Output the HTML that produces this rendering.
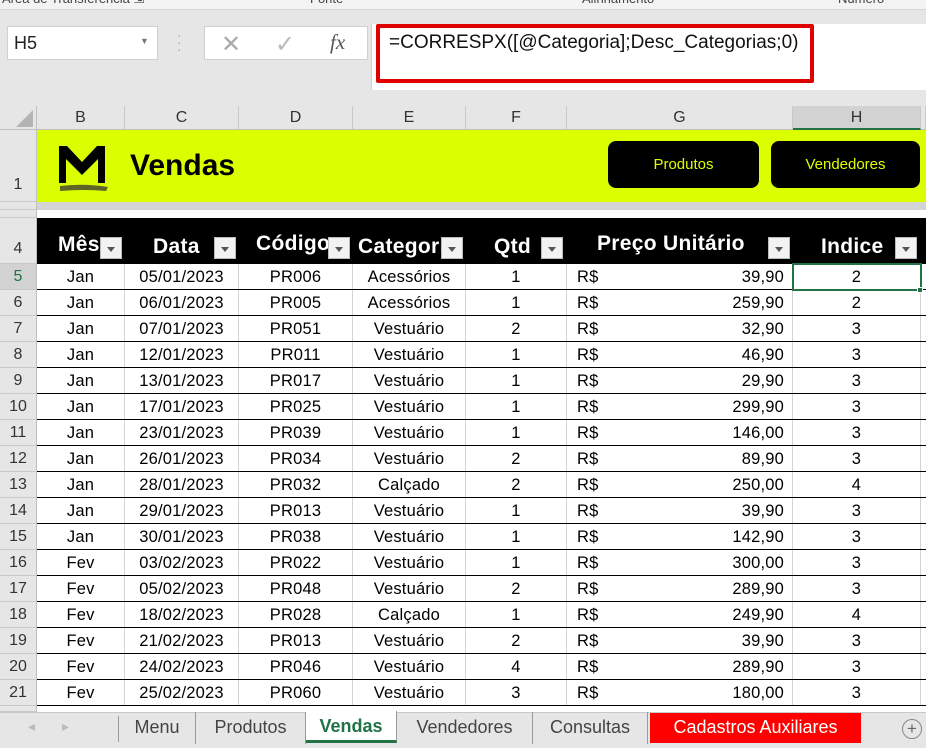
<!DOCTYPE html>
<html><head><meta charset="utf-8"><style>
*{margin:0;padding:0;box-sizing:border-box}
body{width:926px;height:748px;overflow:hidden;background:#e6e6e6;font-family:"Liberation Sans",sans-serif;position:relative}
.a{position:absolute}
.c{position:absolute;white-space:nowrap}
.sheet{left:37px;top:130px;width:889px;height:582px;background:#fff}
.ch{top:106px;height:24px;font-size:16px;color:#333;text-align:center;line-height:24px;border-right:1px solid #c8c8c8;background:#e6e6e6;border-bottom:1px solid #bfbfbf}
.rh{left:0;width:37px;font-size:16px;color:#333;text-align:center;background:#e6e6e6;border-bottom:1px solid #c8c8c8;border-right:1px solid #bfbfbf}
.row{left:37px;width:889px;height:26px;border-bottom:1.5px solid #000;font-size:16.5px;color:#000;line-height:26px}
.row div{position:absolute;top:0;height:25px;border-right:1px solid #d4d4d4;text-align:center;letter-spacing:0.2px}
.hd{color:#fff;font-weight:900;font-size:21px;position:absolute;letter-spacing:0.3px}
.dd{position:absolute;width:22px;height:22px;background:#f2f2f2;border:1px solid #bbb;top:237px;z-index:2}
.dd:after{content:"";position:absolute;left:6px;top:9px;border-left:4px solid transparent;border-right:4px solid transparent;border-top:5px solid #555}
.tab{position:absolute;top:712px;height:32px;line-height:30px;font-size:18px;color:#444;text-align:center;border-right:1px solid #999}
</style></head><body>
<div class="a" style="left:0;top:0;width:926px;height:10px;background:#f3f3f3;border-bottom:1px solid #d6d6d6"></div>
<div class="c" style="left:2px;top:-9px;font-size:13px;color:#444">Área de Transferência ⇲</div>
<div class="c" style="left:310px;top:-9px;font-size:13px;color:#444">Fonte</div>
<div class="c" style="left:582px;top:-9px;font-size:13px;color:#444">Alinhamento</div>
<div class="c" style="left:838px;top:-9px;font-size:13px;color:#444">Número</div>
<div class="a" style="left:7px;top:26px;width:151px;height:34px;background:#fff;border:1px solid #d0d0d0"></div>
<div class="c" style="left:14px;top:33px;font-size:18px;color:#222">H5</div>
<div class="c" style="left:140px;top:36px;font-size:9px;color:#777">▼</div>
<div class="c" style="left:177px;top:32px;font-size:14px;color:#aaa;line-height:7px">·<br>·<br>·</div>
<div class="a" style="left:204px;top:26px;width:164px;height:34px;background:#fff;border:1px solid #d0d0d0"></div>
<div class="c" style="left:221px;top:30px;font-size:24px;color:#aaa">✕</div>
<div class="c" style="left:275px;top:30px;font-size:24px;color:#bbb">✓</div>
<div class="c" style="left:330px;top:30px;font-size:21px;color:#555;font-style:italic;font-family:'Liberation Serif',serif">fx</div>
<div class="a" style="left:371px;top:24px;width:555px;height:66px;background:#fff;border-left:1px solid #d0d0d0"></div>
<div class="a" style="left:376px;top:24px;width:438px;height:59px;border:4px solid #e00000;border-radius:2px"></div>
<div class="c" style="left:389px;top:32px;font-size:19px;color:#111">=CORRESPX([@Categoria];Desc_Categorias;0)</div>

<div class="a" style="left:0;top:106px;width:37px;height:24px;background:#e6e6e6;border-right:1px solid #bfbfbf;border-bottom:1px solid #bfbfbf"></div>
<div class="a" style="left:16px;top:110px;width:0;height:0;border-left:17px solid transparent;border-bottom:17px solid #b4b4b4"></div>
<div class="c ch" style="left:37px;width:88px">B</div>
<div class="c ch" style="left:125px;width:114px">C</div>
<div class="c ch" style="left:239px;width:114px">D</div>
<div class="c ch" style="left:353px;width:113px">E</div>
<div class="c ch" style="left:466px;width:101px">F</div>
<div class="c ch" style="left:567px;width:226px">G</div>
<div class="c ch" style="left:793px;width:128px;background:#d2d2d2;border-bottom:2px solid #217346">H</div>
<div class="c ch" style="left:921px;width:5px"></div>

<div class="a sheet"></div>
<div class="a" style="left:37px;top:130px;width:889px;height:72px;background:#dcff00"></div>
<div class="a" style="left:37px;top:202px;width:889px;height:8px;background:#d4d4d4"></div>
<svg class="a" style="left:56px;top:142px" width="56" height="52" viewBox="0 0 56 52"><path d="M3 41V4h8l15 16L41 4h8v37h-7V17L26 33 10 17v24z" fill="#000"/><path d="M4 44 Q28 41 52 45 L50 49 Q28 47 4 49z" fill="#333" opacity="0.75"/></svg>
<div class="c" style="left:130px;top:149px;font-size:30px;font-weight:bold;color:#000">Vendas</div>
<div class="a" style="left:608px;top:141px;width:151px;height:47px;background:#000;border-radius:8px;color:#dcff00;font-size:15px;text-align:center;line-height:47px">Produtos</div>
<div class="a" style="left:771px;top:141px;width:149px;height:47px;background:#000;border-radius:8px;color:#dcff00;font-size:15px;text-align:center;line-height:47px">Vendedores</div>

<div class="a" style="left:37px;top:218px;width:889px;height:46px;background:#000"></div>
<div class="hd" style="left:58px;top:233px">Mês</div><div class="dd" style="left:100px"></div>
<div class="hd" style="left:153px;top:235px">Data</div><div class="dd" style="left:214px"></div>
<div class="hd" style="left:256px;top:232px">Código</div><div class="dd" style="left:328px"></div>
<div class="hd" style="left:358px;top:235px">Categoria</div><div class="dd" style="left:441px"></div>
<div class="hd" style="left:494px;top:235px">Qtd</div><div class="dd" style="left:541px"></div>
<div class="hd" style="left:597px;top:232px">Preço Unitário</div><div class="dd" style="left:768px"></div>
<div class="hd" style="left:821px;top:235px">Indice</div><div class="dd" style="left:895px"></div>

<div class="c rh" style="top:130px;height:72px;line-height:110px">1</div>
<div class="c rh" style="top:202px;height:8px"></div>
<div class="c rh" style="top:210px;height:8px"></div>
<div class="c rh" style="top:218px;height:46px;line-height:62px">4</div>

<div id="rows"></div>
<div class="a" style="left:37px;top:706px;width:889px;height:6px;background:#fff"></div>
<div class="c rh" style="top:706px;height:6px"></div>

<div class="a" style="left:0;top:712px;width:926px;height:36px;background:#e6e6e6;border-top:1px solid #c8c8c8"></div>
<div class="c" style="left:28px;top:718px;font-size:14px;color:#bbb">◂</div>
<div class="c" style="left:62px;top:718px;font-size:14px;color:#bbb">▸</div>
<div class="a" style="left:118px;top:716px;height:26px;border-left:1px solid #999"></div>
<div class="tab" style="left:119px;width:77px">Menu</div>
<div class="tab" style="left:196px;width:110px">Produtos</div>
<div class="tab" style="left:306px;width:91px;background:#fff;color:#217346;font-weight:bold;top:711px;border-bottom:3px solid #217346">Vendas</div>
<div class="tab" style="left:397px;width:136px">Vendedores</div>
<div class="tab" style="left:533px;width:115px">Consultas</div>
<div class="tab" style="left:650px;width:211px;background:#f00;color:#fff;top:713px;height:30px;line-height:28px;border:none">Cadastros Auxiliares</div>
<div class="a" style="left:902px;top:719px;width:20px;height:20px;border:1px solid #888;border-radius:50%;color:#666;font-size:17px;text-align:center;line-height:18px">+</div>

<script>
var d=[["Jan","05/01/2023","PR006","Acessórios",1,"39,90",2],["Jan","06/01/2023","PR005","Acessórios",1,"259,90",2],["Jan","07/01/2023","PR051","Vestuário",2,"32,90",3],["Jan","12/01/2023","PR011","Vestuário",1,"46,90",3],["Jan","13/01/2023","PR017","Vestuário",1,"29,90",3],["Jan","17/01/2023","PR025","Vestuário",1,"299,90",3],["Jan","23/01/2023","PR039","Vestuário",1,"146,00",3],["Jan","26/01/2023","PR034","Vestuário",2,"89,90",3],["Jan","28/01/2023","PR032","Calçado",2,"250,00",4],["Jan","29/01/2023","PR013","Vestuário",1,"39,90",3],["Jan","30/01/2023","PR038","Vestuário",1,"142,90",3],["Fev","03/02/2023","PR022","Vestuário",1,"300,00",3],["Fev","05/02/2023","PR048","Vestuário",2,"289,90",3],["Fev","18/02/2023","PR028","Calçado",1,"249,90",4],["Fev","21/02/2023","PR013","Vestuário",2,"39,90",3],["Fev","24/02/2023","PR046","Vestuário",4,"289,90",3],["Fev","25/02/2023","PR060","Vestuário",3,"180,00",3]];
var h="";
d.forEach(function(r,i){var t=264+i*26;var sel=i==0;
h+='<div class="c rh" style="top:'+t+'px;height:26px;line-height:26px;'+(sel?'background:#d2d2d2;color:#217346;':'')+'">'+(i+5)+'</div>';
h+='<div class="a row" style="top:'+t+'px">'+
'<div style="left:0;width:88px">'+r[0]+'</div>'+
'<div style="left:88px;width:114px">'+r[1]+'</div>'+
'<div style="left:202px;width:114px">'+r[2]+'</div>'+
'<div style="left:316px;width:113px">'+r[3]+'</div>'+
'<div style="left:429px;width:101px">'+r[4]+'</div>'+
'<div style="left:530px;width:226px;text-align:left;padding-left:10px">R$<span style="position:absolute;right:8px">'+r[5]+'</span></div>'+
'<div style="left:756px;width:128px">'+r[6]+'</div></div>';});
h+='<div class="a" style="left:792px;top:263px;width:130px;height:28px;border:2px solid #217346"></div><div class="a" style="left:917px;top:287px;width:6px;height:6px;background:#217346;border:1px solid #fff"></div>';
document.getElementById("rows").innerHTML=h;
</script>
</body></html>
